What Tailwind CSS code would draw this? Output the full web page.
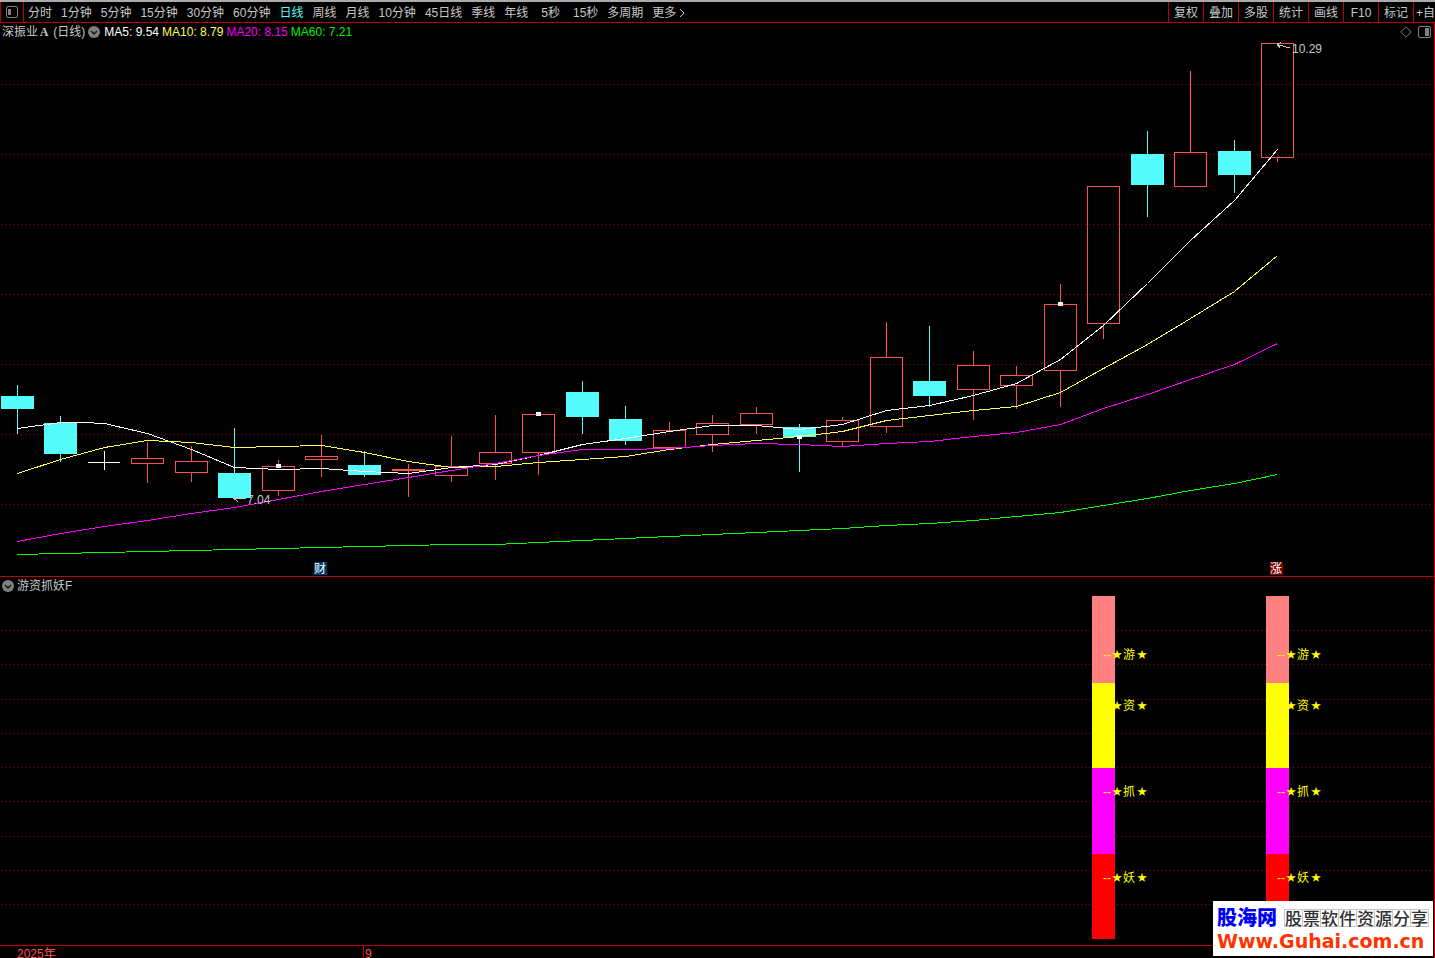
<!DOCTYPE html>
<html lang="zh-CN">
<head>
    <meta charset="UTF-8">
    <meta name="viewport" content="width=device-width, initial-scale=1.0">
    <title>深振业A 日线</title>
    <script src="https://cdn.jsdelivr.net/npm/@tailwindcss/browser@4"></script>
</head>
<body class="relative min-h-screen overflow-hidden bg-black font-['Liberation_Sans','Noto_Sans_CJK_SC',sans-serif] text-[12px] leading-4 text-[#c8c8c8]">

<!-- toolbar -->
<header class="flex h-[23px] items-stretch justify-between overflow-hidden border-t-2 border-b border-t-[#a8acac] border-b-[#c00000] whitespace-nowrap">
    <nav class="flex items-stretch gap-[9px]">
        <button aria-label="侧栏" class="-mr-[5px] flex w-6 items-center justify-center border-x border-[#c00000]">
            <svg class="size-3" viewBox="0 0 12 12" fill="none" stroke="#808080"><rect x=".5" y=".5" width="11" height="11" rx="1.5"/><rect x="2" y="3" width="3" height="6" fill="#808080" stroke="none"/></svg>
        </button>
        <button class="pt-[2px]">分时</button>
        <button class="pt-[2px]">1分钟</button>
        <button class="pt-[2px]">5分钟</button>
        <button class="pt-[2px]">15分钟</button>
        <button class="pt-[2px]">30分钟</button>
        <button class="pt-[2px]">60分钟</button>
        <button class="pt-[2px] text-[#54fcfc]">日线</button>
        <button class="pt-[2px]">周线</button>
        <button class="pt-[2px]">月线</button>
        <button class="pt-[2px]">10分钟</button>
        <button class="pt-[2px]">45日线</button>
        <button class="pt-[2px]">季线</button>
        <button class="pt-[2px]">年线</button>
        <button class="px-1 pt-[2px]">5秒</button>
        <button class="pt-[2px]">15秒</button>
        <button class="pt-[2px]">多周期</button>
        <button class="flex items-center gap-[3px] pt-[2px]">更多
            <svg class="h-[10px] w-[6px]" viewBox="0 0 6 10" fill="none" stroke="#c8c8c8"><path d="M1 1l4 4-4 4"/></svg>
        </button>
    </nav>
    <div class="flex">
        <button class="w-[35px] border-l border-[#c00000] pt-[2px]">复权</button>
        <button class="w-[35px] border-l border-[#c00000] pt-[2px]">叠加</button>
        <button class="w-[35px] border-l border-[#c00000] pt-[2px]">多股</button>
        <button class="w-[35px] border-l border-[#c00000] pt-[2px]">统计</button>
        <button class="w-[35px] border-l border-[#c00000] pt-[2px]">画线</button>
        <button class="w-[35px] border-l border-[#c00000] pt-[2px]">F10</button>
        <button class="w-[35px] border-l border-[#c00000] pt-[2px]">标记</button>
        <button class="w-[22px] overflow-hidden border-l border-[#c00000] pt-[2px] pl-[2px] text-left">+自</button>
    </div>
</header>

<main class="border-r border-[#c00000]">
    <!-- daily candles -->
    <section class="border-b border-[#c00000]">
        <div class="flex h-[18px] items-center gap-[3px] pr-[3px] pl-[2px]">
            <h1>深振业<span class="inline-block w-3 text-center font-['Liberation_Serif','Noto_Sans_CJK_SC',serif] font-bold">A</span> (日线)</h1>
            <button aria-label="展开" class="mr-[1px]">
                <svg class="block size-3" viewBox="0 0 12 12"><circle cx="6" cy="6" r="6" fill="#808080"/><path d="M3 5l3 3 3-3" fill="none" stroke="#181818" stroke-width="1.5"/></svg>
            </button>
            <span class="text-white">MA5: 9.54</span>
            <span class="text-[#ffff54]">MA10: 8.79</span>
            <span class="text-[#f000f0]">MA20: 8.15</span>
            <span class="text-[#00f000]">MA60: 7.21</span>
            <div class="ml-auto flex items-center gap-[6px]">
                <button aria-label="标记点"><svg class="block size-3" viewBox="0 0 12 12" fill="none" stroke="#787878"><path d="M6 .8L11.2 6 6 11.2.8 6z"/></svg></button>
                <button aria-label="右侧栏"><svg class="block h-3 w-[13px]" viewBox="0 0 13 12" fill="none" stroke="#808080"><rect x=".5" y=".5" width="12" height="11" rx="1.5"/><rect x="7" y="2" width="4" height="8" fill="#808080" stroke="none"/></svg></button>
            </div>
        </div>
        <svg class="block h-auto w-full" viewBox="0 41 1434 535" shape-rendering="crispEdges">
            <g id="priceGrid"></g>
            <g id="candles"></g>
            <g id="averages" fill="none" transform="translate(.5 .5)"></g>
            <g fill="#fff">
                <rect x="276" y="464" width="5" height="4"/>
                <rect x="536" y="412" width="5" height="4"/>
                <rect x="797" y="435" width="5" height="4"/>
                <rect x="1058" y="302" width="5" height="4"/>
            </g>
            <g fill="none" stroke="#c8c8c8">
                <path d="M234 498.500h12M238 495l-4 3.500 4 3.500"/>
                <path d="M1277.500 44.500l12 3.500M1281 42.500l-4 1.500 3 4"/>
            </g>
            <g fill="#c8c8c8" font-size="12">
                <text x="247" y="504">7.04</text>
                <text x="1292" y="53">10.29</text>
            </g>
            <rect x="314" y="562" width="13" height="13" fill="#003870"/>
            <rect x="1270" y="562" width="13" height="13" fill="#800000"/>
            <g fill="#fff" font-size="12">
                <text x="314" y="573">财</text>
                <text x="1270" y="573">涨</text>
            </g>
        </svg>
    </section>

    <!-- indicator -->
    <section class="border-b border-[#c00000]">
        <div class="flex h-[17px] items-center gap-[3px] pl-[2px]">
            <button aria-label="展开">
                <svg class="block size-3" viewBox="0 0 12 12"><circle cx="6" cy="6" r="6" fill="#808080"/><path d="M3 5l3 3 3-3" fill="none" stroke="#181818" stroke-width="1.5"/></svg>
            </button>
            <h2>游资抓妖F</h2>
        </div>
        <svg class="block h-auto w-full" viewBox="0 594 1434 351" shape-rendering="crispEdges">
            <g id="signalGrid"></g>
            <g id="signals" font-size="12"></g>
        </svg>
    </section>

    <footer class="flex h-3 overflow-hidden text-[#ff5050]">
        <span class="w-[363px] shrink-0 pl-[17px]">2025年</span>
        <span class="border-l border-[#c00000] pl-[1px]">9</span>
    </footer>
</main>

<!-- site mark -->
<a href="#" class="absolute right-[2px] bottom-[2px] block w-[220px] bg-white px-1 pt-[5px] pb-1 whitespace-nowrap">
    <span class="flex items-center justify-between">
        <span class="text-[20px] leading-6 font-black text-[#0000f8]">股海网</span>
        <span class="flex border-y border-l border-[#c8c8c8] font-['Noto_Sans_CJK_SC',sans-serif] text-[17px] leading-4 font-medium text-[#303030]">
            <span class="w-[18px] border-r border-[#c8c8c8] text-center">股</span>
            <span class="w-[18px] border-r border-[#c8c8c8] text-center">票</span>
            <span class="w-[18px] border-r border-[#c8c8c8] text-center">软</span>
            <span class="w-[18px] border-r border-[#c8c8c8] text-center">件</span>
            <span class="w-[18px] border-r border-[#c8c8c8] text-center">资</span>
            <span class="w-[18px] border-r border-[#c8c8c8] text-center">源</span>
            <span class="w-[18px] border-r border-[#c8c8c8] text-center">分</span>
            <span class="w-[18px] border-r border-[#c8c8c8] text-center">享</span>
        </span>
    </span>
    <span class="block font-['DejaVu_Sans',sans-serif] text-[19px] leading-[22px] font-bold text-[#ff3300]">Www.Guhai.com.cn</span>
</a>

<script>
    const RED = '#ff5050', CYAN = '#54fcfc';

    // x, high, low, body top, body bottom, type (u = up, d = down)
    const candles = [
        [17, 385, 434, 396, 409, 'd'], [60, 416, 462, 423, 454, 'd'],
        [147, 442, 483, 458, 464, 'u'], [191, 446, 482, 461, 473, 'u'],
        [234, 428, 498, 473, 498, 'd'], [278, 460, 496, 466, 491, 'u'],
        [321, 435, 477, 456, 460, 'u'], [364, 451, 477, 465, 475, 'd'],
        [408, 464, 497, 469, 471, 'u'], [451, 436, 482, 466, 476, 'u'],
        [495, 415, 480, 452, 464, 'u'], [538, 414, 475, 414, 453, 'u'],
        [582, 381, 434, 392, 417, 'd'], [625, 406, 445, 419, 441, 'd'],
        [669, 422, 448, 430, 448, 'u'], [712, 415, 452, 423, 435, 'u'],
        [756, 407, 434, 413, 425, 'u'], [799, 424, 472, 427, 437, 'd'],
        [842, 417, 446, 420, 442, 'u'], [886, 322, 433, 357, 427, 'u'],
        [929, 326, 407, 381, 396, 'd'], [973, 351, 420, 365, 390, 'u'],
        [1016, 366, 409, 375, 386, 'u'], [1060, 284, 407, 304, 371, 'u'],
        [1103, 186, 339, 186, 324, 'u'], [1147, 131, 217, 154, 185, 'd'],
        [1190, 71, 187, 152, 187, 'u'], [1234, 140, 193, 151, 175, 'd'],
        [1277, 43, 162, 43, 158, 'u']
    ];

    const averages = {
        '#00ff00': '17,554 60,553 104,552 147,551 191,550 234,549 278,548 321,547 364,546 408,545 451,544 495,544 538,542 582,540 625,538 669,536 712,534 756,532 799,530 842,528 886,525 929,523 973,520 1016,516 1060,512 1103,505 1147,498 1190,490 1234,483 1277,474',
        '#ffff54': '17,473 60,459 104,447 147,440 191,442 234,447 278,446 321,445 364,452 408,461 451,467 495,466 538,462 582,459 625,456 669,449 712,444 756,440 799,436 842,431 886,420 929,415 973,410 1016,406 1060,392 1103,368 1147,344 1190,318 1234,291 1277,255',
        '#ffffff': '17,428 60,422 82,422 104,423 147,433 191,449 234,467 278,469 321,468 364,471 408,473 451,467 495,464 538,455 582,444 625,438 669,431 712,425 756,425 799,429 842,424 886,410 929,405 973,395 1016,383 1060,359 1103,325 1147,283 1190,240 1234,200 1277,149',
        '#ff00ff': '17,541 60,533 104,526 147,520 191,513 234,507 278,499 321,491 364,484 408,477 451,470 495,463 538,455 582,449 625,449 669,448 712,445 756,443 799,444 842,446 886,443 929,441 973,436 1016,432 1060,424 1103,408 1147,394 1190,379 1234,364 1277,343'
    };

    function grid(rows) {
        return rows.map(y => `<line x1="1" x2="1431" y1="${y + .5}" y2="${y + .5}" stroke="#b00000" stroke-dasharray="1 3"/>`).join('');
    }

    function candle([x, high, low, top, bottom, type]) {
        const color = type === 'd' ? CYAN : RED;
        const wick = (a, b) => b > a ? `<rect x="${x}" y="${a}" width="1" height="${b - a}" fill="${color}"/>` : '';
        const body = type === 'd' || bottom - top < 3
            ? `<rect x="${x - 16}" y="${top}" width="33" height="${bottom - top}" fill="${color}"/>`
            : `<rect x="${x - 15.5}" y="${top + .5}" width="32" height="${bottom - top - 1}" fill="none" stroke="${color}"/>`;
        return wick(high, top) + wick(bottom, low) + body;
    }

    function signal(x) {
        const parts = [
            ['游', 596, 683, '#ff8080', 659], ['资', 683, 768, '#ffff00', 710],
            ['抓', 768, 854, '#ff00ff', 796], ['妖', 854, 939, '#ff0000', 882]
        ];
        return parts.map(([, top, bottom, color]) => `<rect x="${x}" y="${top}" width="23" height="${bottom - top}" fill="${color}"/>`).join('')
            + parts.map(([name, , , , y]) => `<g fill="#ffff00"><text x="${x + 11}" y="${y}">--</text><text x="${x + 20}" y="${y - 1}" font-size="10">★</text><text x="${x + 31}" y="${y}">${name}</text><text x="${x + 45}" y="${y - 1}" font-size="10">★</text></g>`).join('');
    }

    document.getElementById('priceGrid').innerHTML = grid([84, 154, 224, 294, 364, 434, 504]);
    document.getElementById('signalGrid').innerHTML = grid([630, 664, 699, 733, 767, 801, 836, 870, 904]);
    document.getElementById('candles').innerHTML = candles.map(candle).join('')
        + '<path d="M88 462.500h32M104.500 451v19" stroke="#fff"/>';
    document.getElementById('averages').innerHTML = Object.entries(averages)
        .map(([color, points]) => `<polyline points="${points}" stroke="${color}"/>`).join('');
    document.getElementById('signals').innerHTML = signal(1092) + signal(1266);
</script>
</body>
</html>
